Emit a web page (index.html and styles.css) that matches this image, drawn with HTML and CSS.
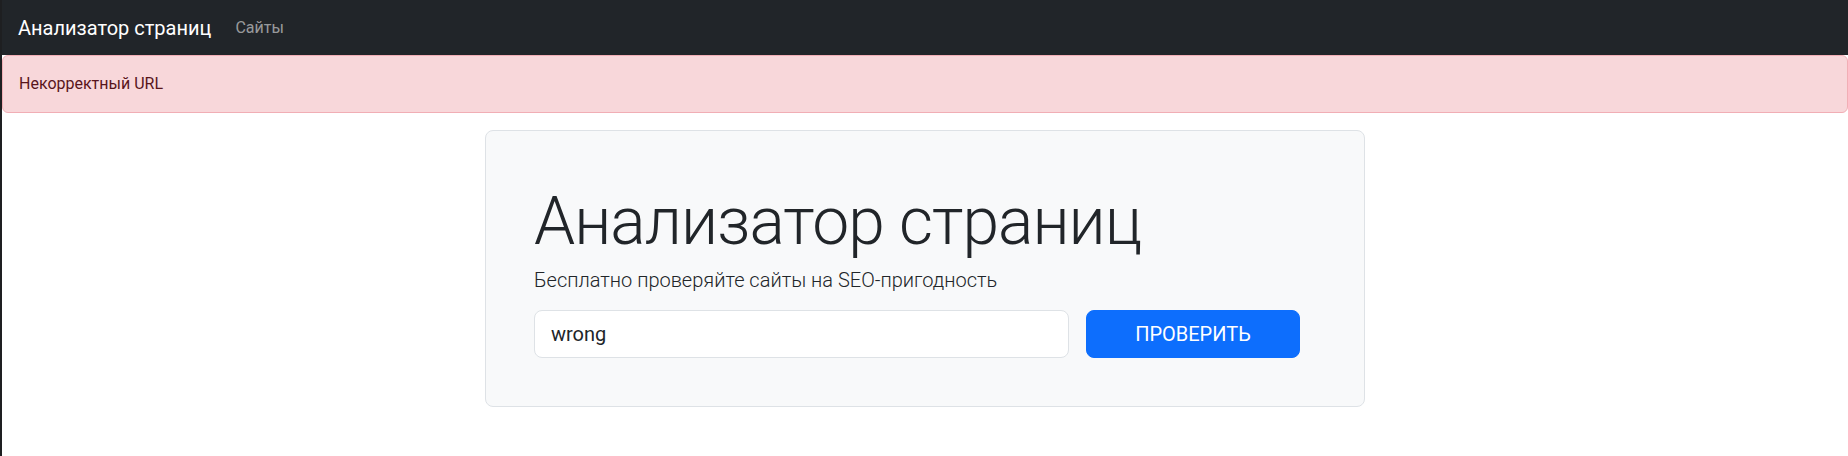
FILE: index.html
```html
<!DOCTYPE html>
<html lang="ru">
<head>
<meta charset="utf-8">
<title>Анализатор страниц</title>
<link rel="stylesheet" href="styles.css">
</head>
<body>
<nav class="navbar">
  <a class="brand" href="#">Анализатор страниц</a>
  <a class="nav-link" href="#">Сайты</a>
</nav>
<div class="alert">Некорректный URL</div>
<main class="container">
  <section class="card">
    <h1 class="display">Анализатор страниц</h1>
    <p class="lead">Бесплатно проверяйте сайты на SEO-пригодность</p>
    <form class="check-form">
      <input class="url-input" type="text" value="wrong">
      <button class="btn" type="button">ПРОВЕРИТЬ</button>
    </form>
  </section>
</main>
</body>
</html>
```

FILE: styles.css
```css
html {
  background: #1e1f21;
}
body {
  margin: 0 0 0 2px;
  min-height: 100vh;
  background: #fff;
  font-family: Roboto, "Noto Sans", sans-serif;
  color: #212529;
  font-size: 16px;
  line-height: 1.5;
}
.navbar {
  height: 55px;
  background: #212529;
  display: flex;
  align-items: center;
  padding: 0 16px;
  box-sizing: border-box;
}
.brand {
  color: #fff;
  font-size: 20px;
  line-height: 30px;
  text-decoration: none;
  margin-right: 16px;
}
.nav-link {
  color: rgba(255, 255, 255, 0.55);
  text-decoration: none;
  padding: 0 8px;
}
.alert {
  background: #f8d7da;
  border: 1px solid #f1aeb5;
  border-radius: 6px;
  color: #58151c;
  padding: 16px;
  line-height: 24px;
}
.container {
  width: 880px;
  margin: 17px auto 0;
}
.card {
  background: #f8f9fa;
  border: 1px solid #dee2e6;
  border-radius: 8px;
  padding: 48px;
}
.display {
  font-size: 66px;
  font-weight: 300;
  letter-spacing: -1px;
  line-height: 86px;
  margin: 0;
}
.lead {
  font-size: 20px;
  font-weight: 300;
  line-height: 30px;
  margin: 0 0 15px;
}
.check-form {
  display: flex;
  gap: 17px;
}
.url-input {
  width: 535px;
  height: 48px;
  box-sizing: border-box;
  border: 1px solid #dee2e6;
  border-radius: 8px;
  background: #fff;
  padding: 8px 16px;
  font: inherit;
  font-size: 20px;
  color: #212529;
  outline: none;
}
.btn {
  width: 214px;
  height: 48px;
  box-sizing: border-box;
  border: 1px solid #0d6efd;
  border-radius: 8px;
  background: #0d6efd;
  color: #fff;
  font: inherit;
  font-size: 20px;
  line-height: 30px;
  padding: 8px 0;
}
```
